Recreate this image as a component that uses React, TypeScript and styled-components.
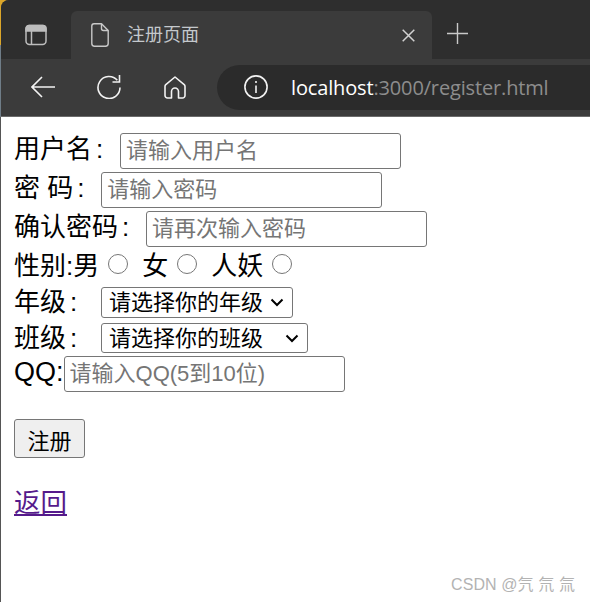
import React from "react";
import styled, { createGlobalStyle } from "styled-components";

const Global = createGlobalStyle`
  html, body { margin: 0; padding: 0; background: #fff; }
  body { font-family: "Liberation Sans", "Noto Sans CJK SC", sans-serif; }
`;

const chevron =
  "data:image/svg+xml;utf8," +
  encodeURIComponent(
    '<svg xmlns="http://www.w3.org/2000/svg" width="14" height="9" viewBox="0 0 14 9"><path d="M1.5 1.5 7 7 12.5 1.5" fill="none" stroke="#000" stroke-width="2"/></svg>'
  );

const Screen = styled.div`
  position: relative;
  width: 590px;
  height: 602px;
  overflow: hidden;
  background: linear-gradient(#dba62a 0 45px, #6f7d88 45px 117px, #fff 117px);
`;
const Chrome = styled.header`
  display: flex;
  flex-direction: column;
  height: 117px;
  margin-left: 1px;
  overflow: hidden;
  background: #3b3b3b;
  border-bottom: 1px solid #6a6a6a;
  border-radius: 8px 0 0 0;
  box-sizing: border-box;
`;
const TabStrip = styled.div`
  display: flex;
  align-items: flex-end;
  height: 59px;
  background: #2e2e2e;
`;
const SideButton = styled.div`
  display: flex;
  align-items: center;
  justify-content: center;
  width: 70px;
  height: 48px;
  border-radius: 0 0 5px 0;
  align-self: flex-start;
  margin-top: 11px;
`;
const Tab = styled.div`
  display: flex;
  align-items: center;
  width: 361px;
  height: 48px;
  padding: 0 17px 0 20px;
  box-sizing: border-box;
  background: #3b3b3b;
  border-radius: 6px 6px 0 0;
  gap: 18px;
`;
const TabTitle = styled.span`
  flex: 1;
  font-size: 18px;
  line-height: 24px;
  color: #c4c8cc;
`;
const NewTab = styled.div`
  display: flex;
  margin: 0 0 15px 15px;
`;
const Toolbar = styled.div`
  display: flex;
  align-items: center;
  height: 57px;
  padding-left: 9px;
  padding-bottom: 1px;
  box-sizing: border-box;
`;
const NavButton = styled.div`
  display: flex;
  justify-content: center;
  width: 66px;
`;
const AddressPill = styled.div`
  display: flex;
  align-items: center;
  flex: 1;
  height: 45px;
  margin-left: 9px;
  padding-left: 27px;
  gap: 23px;
  background: #2b2b2b;
  border-radius: 23px 0 0 23px;
`;
const Url = styled.span`
  font-family: "Open Sans", sans-serif;
  font-size: 20px;
  letter-spacing: -0.15px;
  color: #8d8d8d;
`;
const Host = styled.span`
  color: #fff;
`;
const Page = styled.main`
  display: flex;
  flex-direction: column;
  align-items: flex-start;
  height: 485px;
  padding: 16px 0 0 13px;
  font-size: 26px;
  color: #000;
  background: #fff;
  border-left: 1px solid #555;
  box-sizing: border-box;
`;
const Row = styled.div<{ $h: number }>`
  display: flex;
  align-items: flex-start;
  height: ${(p) => p.$h}px;
  line-height: 33px;
  white-space: pre;
`;
const Colon = styled.span`
  width: 22px;
  padding-left: 4px;
`;
const QQLabel = styled.span`
  font-size: 27px;
`;
const TextInput = styled.input<{ $ml?: number }>`
  width: 281px;
  height: 36px;
  margin-left: ${(p) => p.$ml ?? 2}px;
  padding: 0 5px;
  box-sizing: border-box;
  font: 22px "Liberation Sans", "Noto Sans CJK SC", sans-serif;
  border: 1.6px solid #767676;
  border-radius: 3px;
  background: #fff;
  &::placeholder { color: #757575; opacity: 1; }
`;
const Radio = styled.input.attrs({ type: "radio" })`
  width: 20px;
  height: 20px;
  margin: 4px 14px 0 9px;
`;
const LastRadio = styled(Radio)`
  margin-right: 0;
`;
const Select = styled.select<{ $w: number; $h: number }>`
  width: ${(p) => p.$w}px;
  height: ${(p) => p.$h}px;
  margin: 1px 0 0 9px;
  padding: 0 0 0 7px;
  box-sizing: border-box;
  appearance: none;
  font: 22px "Liberation Sans", "Noto Sans CJK SC", sans-serif;
  color: #000;
  background: #fff url("${chevron}") no-repeat right 8px center;
  border: 1.6px solid #767676;
  border-radius: 3px;
`;
const Submit = styled.button`
  width: 71px;
  height: 39px;
  margin-top: 27px;
  padding: 0;
  font: 22px "Liberation Sans", "Noto Sans CJK SC", sans-serif;
  color: #000;
  background: #efefef;
  border: 1.6px solid #767676;
  border-radius: 3px;
`;
const BackLink = styled.a`
  margin-top: 27px;
  font-size: 26.5px;
  line-height: 36px;
  color: #551a8b;
  text-decoration: underline;
`;
const Watermark = styled.div`
  position: absolute;
  left: 451px;
  top: 574px;
  font-size: 16px;
  line-height: 22px;
  letter-spacing: 0.1px;
  color: #b3b3b3;
  white-space: pre;
`;

const Ic = styled.svg`
  display: block;
  fill: none;
  flex: none;
`;

export default function App() {
  return (
    <Screen>
      <Global />
      <Chrome>
        <TabStrip>
          <SideButton>
            <Ic width="22" height="22" viewBox="0 0 22 22" stroke="#bdbdbd" strokeWidth="1.5">
              <path d="M1 7V4.5A3 3 0 0 1 4 1.5H18A3 3 0 0 1 21 4.5V7Z" fill="#bdbdbd" />
              <rect x="1" y="1.5" width="20" height="19" rx="3.5" />
              <path d="M6.5 7V20" />
            </Ic>
          </SideButton>
          <Tab>
            <Ic width="18" height="24" viewBox="0 0 18 24" stroke="#c9c9c9" strokeWidth="1.4" strokeLinejoin="round">
              <path d="M3 .8H10.5L17.2 7.5V20.5A2.7 2.7 0 0 1 14.5 23.2H3.5A2.7 2.7 0 0 1 .8 20.5V3A2.2 2.2 0 0 1 3 .8Z" />
              <path d="M10.5 .8V5.5A2 2 0 0 0 12.5 7.5H17.2" />
            </Ic>
            <TabTitle>注册页面</TabTitle>
            <Ic width="13" height="13" viewBox="0 0 13 13" stroke="#d2d2d2" strokeWidth="1.5">
              <path d="M.7 .7 12.3 12.3M12.3 .7 .7 12.3" />
            </Ic>
          </Tab>
          <NewTab>
            <Ic width="21" height="21" viewBox="0 0 21 21" stroke="#c9c9c9" strokeWidth="1.4">
              <path d="M10.5 0V21M0 10.5H21" />
            </Ic>
          </NewTab>
        </TabStrip>
        <Toolbar>
          <NavButton>
            <Ic width="24" height="22" viewBox="0 0 24 22" stroke="#f2f2f2" strokeWidth="1.6">
              <path d="M24 11H1.2M11 1 1 11 11 21" />
            </Ic>
          </NavButton>
          <NavButton>
            <Ic width="24" height="24" viewBox="0 0 24 24" stroke="#f2f2f2" strokeWidth="1.6">
              <path d="M20.3 5.3A11 11 0 1 0 23 12.5" />
              <path d="M22.5 0V7H15.5" />
            </Ic>
          </NavButton>
          <NavButton>
            <Ic width="22" height="23" viewBox="0 0 22 23" stroke="#f2f2f2" strokeWidth="1.6" strokeLinejoin="round">
              <path d="M11 1 1.8 8.6A2.4 2.4 0 0 0 1 10.4V19.5A2.5 2.5 0 0 0 3.5 22H7.5V15.5A3.5 3.5 0 0 1 14.5 15.5V22H18.5A2.5 2.5 0 0 0 21 19.5V10.4A2.4 2.4 0 0 0 20.2 8.6Z" />
            </Ic>
          </NavButton>
          <AddressPill>
            <Ic width="24" height="24" viewBox="0 0 24 24" stroke="#f2f2f2" strokeWidth="1.6">
              <circle cx="12" cy="12" r="11.1" />
              <path d="M12 10.5V18M12 6V8" />
            </Ic>
            <Url>
              <Host>localhost</Host>:3000/register.html
            </Url>
          </AddressPill>
        </Toolbar>
      </Chrome>
      <Page>
        <Row $h={39}>
          用户名<Colon>:</Colon>
          <TextInput placeholder="请输入用户名" />
        </Row>
        <Row $h={39}>
          密 码<Colon>:</Colon>
          <TextInput placeholder="请输入密码" />
        </Row>
        <Row $h={39}>
          确认密码<Colon>:</Colon>
          <TextInput placeholder="请再次输入密码" />
        </Row>
        <Row $h={36}>
          性别:男
          <Radio name="sex" />女
          <Radio name="sex" />人妖
          <LastRadio name="sex" />
        </Row>
        <Row $h={36}>
          年级<Colon>:</Colon>
          <Select $w={192} $h={31}>
            <option>请选择你的年级</option>
          </Select>
        </Row>
        <Row $h={34}>
          班级<Colon>:</Colon>
          <Select $w={207} $h={30}>
            <option>请选择你的班级</option>
          </Select>
        </Row>
        <Row $h={36}>
          <QQLabel>QQ:</QQLabel>
          <TextInput placeholder="请输入QQ(5到10位)" $ml={0} />
        </Row>
        <Submit>注册</Submit>
        <BackLink href="#">返回</BackLink>
      </Page>
      <Watermark>CSDN @氕 氘 氚</Watermark>
    </Screen>
  );
}
